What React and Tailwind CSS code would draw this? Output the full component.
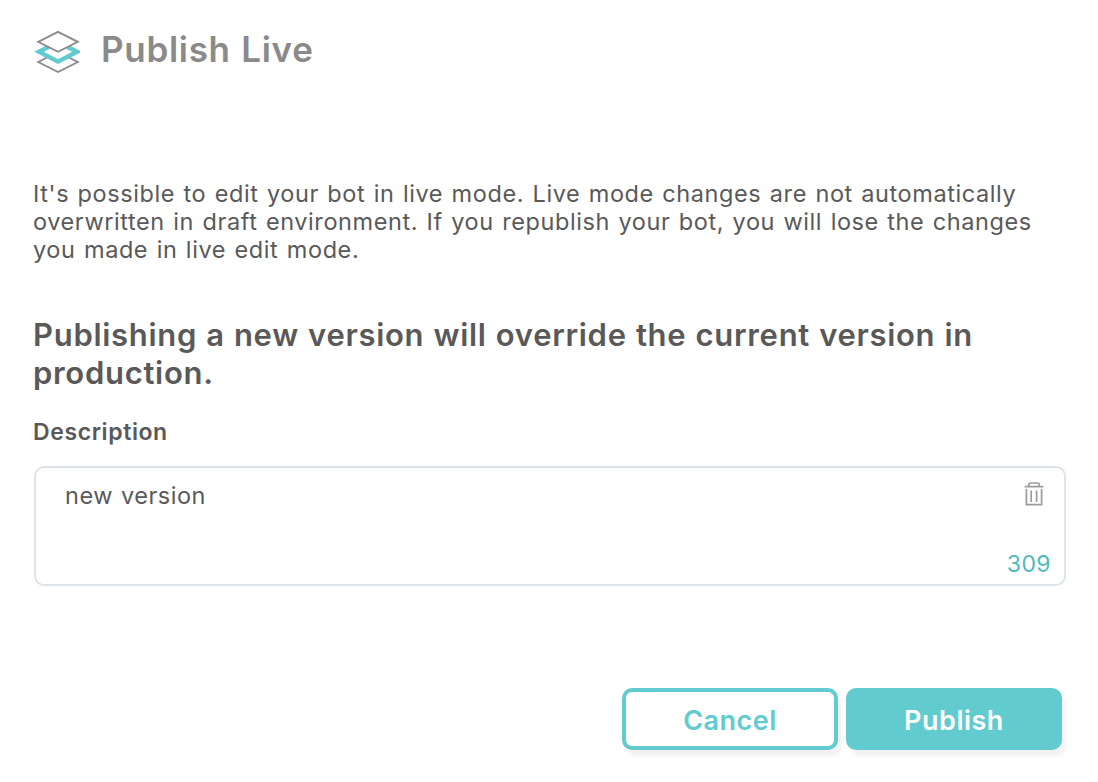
const bodyLines = [
  "It's possible to edit your bot in live mode. Live mode changes are not automatically",
  'overwritten in draft environment. If you republish your bot, you will lose the changes',
  'you made in live edit mode.',
];

function LayersIcon() {
  return (
    <svg className="h-[46px] w-[46px] shrink-0" viewBox="0 0 46 46" fill="none">
      <path d="M4.2 33 L24 23 L43.8 33 L24 43 Z" stroke="#8c8c8c" strokeWidth="1.9" />
      <path d="M5 22.8 L24 13 L43 22.8 L24 32.6 Z" fill="#fff" stroke="#62cbd0" strokeWidth="4.4" />
      <path d="M4.2 12.8 L24 2.9 L43.8 12.8 L24 22.8 Z" fill="#fff" stroke="#8c8c8c" strokeWidth="1.9" />
    </svg>
  );
}

function TrashIcon() {
  return (
    <svg className="h-6 w-5" viewBox="0 0 20 24" fill="none" stroke="#9b9b9b" strokeWidth="1.7">
      <path d="M0.6 4.6 H19.4 M4.8 4.4 V2.4 Q4.8 1 6.2 1 H13.8 Q15.2 1 15.2 2.4 V4.4" />
      <path d="M2.4 7 V22.6 H17.6 V7" />
      <path d="M7.2 8.5 V20 M12.6 8.5 V20" />
    </svg>
  );
}

export default function App() {
  return (
    <main className="flex h-[782px] w-[1098px] flex-col bg-white pl-[34px] pr-8 font-['Inter','Liberation_Sans',sans-serif] text-[#595959]">
      <header className="mt-[29px] flex h-[46px] items-center gap-[21px]">
        <LayersIcon />
        <h1 className="mt-[-6px] whitespace-nowrap text-[35px] leading-[42px] font-[560] tracking-[0.7px] [word-spacing:1px] text-[#8a8a8a]">Publish Live</h1>
      </header>

      <p className="mt-[105px] -ml-px flex flex-col items-start text-[23.5px] leading-7 tracking-[0.58px] [word-spacing:1.3px]">
        {bodyLines.map((line) => (
          <span key={line} className="whitespace-nowrap">{line}</span>
        ))}
      </p>

      <h2 className="mt-[52px] -ml-px flex flex-col items-start text-[31px] leading-[38px] font-semibold tracking-[0.7px] [word-spacing:0.7px]">
        <span className="whitespace-nowrap">Publishing a new version will override the current version in</span>
        <span className="whitespace-nowrap">production.</span>
      </h2>

      <div className="mt-[26px] -ml-px flex">
        <label className="text-[23px] leading-7 font-[560] tracking-[0.6px]">Description</label>
      </div>
      <div className="mt-5 flex h-[120px] justify-between rounded-[10px] border-2 border-[#dce3ea] pl-[29px]">
        <span className="mt-[14px] text-[23.5px] leading-7 tracking-[0.5px] [word-spacing:1px]">new version</span>
        <div className="flex flex-col items-end justify-between pt-[14px] pr-[13px] pb-[6px]">
          <span className="mr-[7px]"><TrashIcon /></span>
          <span className="text-[23px] leading-7 tracking-[0.4px] text-[#4fb9be]">309</span>
        </div>
      </div>

      <footer className="mt-[102px] mr-1 flex justify-end gap-2">
        <button className="flex h-[62px] w-[216px] items-center justify-center rounded-[10px] border-4 border-[#62cbd0] bg-white pt-1 text-[27px] font-semibold tracking-[0.5px] text-[#62cbd0] shadow-[4px_6px_4px_rgba(0,0,0,0.06)]">
          <span>Cancel</span>
        </button>
        <button className="flex h-[62px] w-[216px] items-center justify-center rounded-[10px] bg-[#62cbd0] pt-1 text-[27px] font-semibold tracking-[0.5px] text-white shadow-[4px_6px_4px_rgba(0,0,0,0.06)]">
          <span>Publish</span>
        </button>
      </footer>
    </main>
  );
}
